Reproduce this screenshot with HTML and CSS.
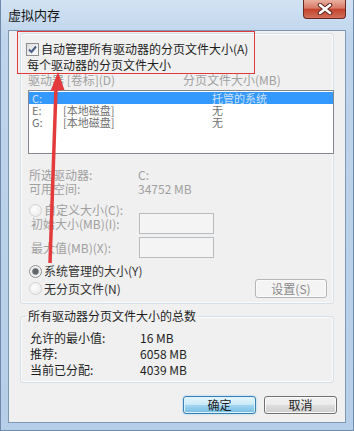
FILE: index.html
```html
<!DOCTYPE html>
<html lang="zh-CN">
<head>
    <meta charset="UTF-8">
    <title>虚拟内存</title>
    <link rel="stylesheet" href="styles.css">
</head>
<body>
    <div class="window">
        <div class="titlebar">
            <span class="title">虚拟内存</span>
            <div class="close">
                <svg width="16" height="12" viewBox="0 0 16 12">
                    <path d="M3 2 L13 10 M13 2 L3 10" stroke="#5a2018" stroke-width="4.5" stroke-linecap="round"/>
                    <path d="M3 2 L13 10 M13 2 L3 10" stroke="#fff" stroke-width="2.6" stroke-linecap="round"/>
                </svg>
            </div>
        </div>

        <div class="client">
            <div class="group paging">
                <div class="check-row">
                    <span class="checkbox">
                        <svg width="11" height="11" viewBox="0 0 11 11">
                            <path d="M2 5.5 L4.5 8 L9 2.5" fill="none" stroke="#4a5f86" stroke-width="2"/>
                        </svg>
                    </span>
                    <span>自动管理所有驱动器的分页文件大小(A)</span>
                </div>
                <div class="subtitle">每个驱动器的分页文件大小</div>
                <div class="list-head">
                    <span class="col-drive">驱动器 [卷标](D)</span>
                    <span>分页文件大小(MB)</span>
                </div>
                <div class="drive-list">
                    <div class="drive-row selected"><span class="c1">C:</span><span class="c2"></span><span>托管的系统</span></div>
                    <div class="drive-row"><span class="c1">E:</span><span class="c2">[本地磁盘]</span><span>无</span></div>
                    <div class="drive-row"><span class="c1">G:</span><span class="c2">[本地磁盘]</span><span>无</span></div>
                </div>

                <div class="info-row first"><span class="info-label">所选驱动器:</span><span>C:</span></div>
                <div class="info-row"><span class="info-label">可用空间:</span><span>34752 MB</span></div>

                <div class="radio-row custom"><span class="radio"></span><span class="muted">自定义大小(C):</span></div>
                <div class="field-row"><span class="field-label">初始大小(MB)(I):</span><span class="input"></span></div>
                <div class="field-row second"><span class="field-label">最大值(MB)(X):</span><span class="input"></span></div>
                <div class="radio-row system"><span class="radio on"></span><span>系统管理的大小(Y)</span></div>
                <div class="last-row">
                    <div class="radio-line"><span class="radio"></span><span>无分页文件(N)</span></div>
                    <button class="btn disabled">设置(S)</button>
                </div>
            </div>

            <fieldset class="group totals">
                <legend>所有驱动器分页文件大小的总数</legend>
                <div class="total-row first"><span class="total-label">允许的最小值:</span><span>16 MB</span></div>
                <div class="total-row"><span class="total-label">推荐:</span><span>6058 MB</span></div>
                <div class="total-row"><span class="total-label">当前已分配:</span><span>4039 MB</span></div>
            </fieldset>

            <div class="buttons">
                <button class="btn default">确定</button>
                <button class="btn">取消</button>
            </div>
        </div>

        <!-- annotation drawn over the dialog -->
        <div class="annot-box"></div>
        <svg class="annot-arrow" width="354" height="431" viewBox="0 0 354 431">
            <line x1="50" y1="263" x2="56" y2="88" stroke="#e33b3b" stroke-width="3.5"/>
            <polygon points="58,72 50.5,91 64.5,90" fill="#e33b3b"/>
        </svg>
    </div>
</body>
</html>
```

FILE: styles.css
```css
body {
    margin: 0;
    background: #b7cee8;
}

.window {
    position: relative;
    width: 354px;
    height: 431px;
    box-sizing: border-box;
    border: 1px solid #6f8aab;
    border-top: none;
    background: linear-gradient(#d2e2f3, #bed4ec 40px, #b7cee8);
    display: flex;
    flex-direction: column;
    font-family: "Noto Sans CJK SC", "Liberation Sans", sans-serif;
    font-size: 12px;
    color: #1e1e1e;
}

.titlebar {
    height: 30px;
    flex: none;
    display: flex;
    justify-content: space-between;
    align-items: flex-start;
}

.title {
    margin: 7px 0 0 7px;
    font-size: 13px;
    line-height: 16px;
    color: #161616;
}

.close {
    width: 43px;
    height: 19px;
    margin-right: 7px;
    box-sizing: border-box;
    border: 1px solid #6b2a21;
    border-top: none;
    border-radius: 0 0 4px 4px;
    background: linear-gradient(#eab0a0, #d77a66 45%, #c4452f 52%, #d2705a);
    display: flex;
    align-items: center;
    justify-content: center;
}

.client {
    flex: 1;
    margin: 0 7px 7px 7px;
    border: 1px solid #7d97b5;
    background: #f0f0f0;
    padding: 2px 11px 0 11px;
    display: flex;
    flex-direction: column;
}

.group {
    border: 1px solid #d5dfe5;
    border-radius: 3px;
    box-shadow: inset 0 0 0 1px #fbfbfb;
}

.paging {
    padding-bottom: 5px;
}

.check-row {
    margin-top: 8px;
    height: 14px;
    line-height: 14px;
    padding-left: 5px;
    display: flex;
    align-items: center;
    gap: 2px;
}

.checkbox {
    width: 13px;
    height: 13px;
    box-sizing: border-box;
    border: 1px solid #8e8f8f;
    background: linear-gradient(135deg, #dcdcdc, #fdfdfd);
    display: flex;
    align-items: center;
    justify-content: center;
}

.subtitle {
    margin: 2px 0 0 6px;
    line-height: 14px;
}

.list-head {
    margin-top: 1px;
    padding-left: 7px;
    line-height: 14px;
    color: #a0a0a0;
    display: flex;
}

.col-drive {
    width: 155px;
}

.drive-list {
    margin: 3px 0 0 7px;
    width: 306px;
    height: 64px;
    box-sizing: border-box;
    border: 1px solid #828790;
    background: #fff;
    padding-top: 1px;
}

.drive-row {
    height: 12px;
    line-height: 12px;
    font-size: 11px;
    padding-left: 3px;
    display: flex;
    color: #707070;
}

.drive-row.selected {
    background: #3399ff;
    color: #cfe0f5;
}

.c1 {
    width: 31px;
}

.c2 {
    width: 149px;
}

.info-row {
    line-height: 14px;
    padding-left: 8px;
    display: flex;
    color: #a0a0a0;
}

.info-row.first {
    margin-top: 14px;
}

.info-label {
    width: 109px;
}

.radio-row,
.radio-line {
    height: 14px;
    line-height: 14px;
    display: flex;
    align-items: center;
    gap: 2px;
}

.radio-row {
    padding-left: 8px;
}

.radio-row.custom {
    margin-top: 7px;
}

.radio-row.system {
    margin-top: 6px;
    color: #333;
}

.muted {
    color: #a0a0a0;
}

.radio {
    width: 13px;
    height: 13px;
    box-sizing: border-box;
    border-radius: 50%;
    border: 1px solid #d2d2d2;
    background: radial-gradient(circle at 40% 40%, #fdfdfd, #e8e8e8);
}

.radio.on {
    border-color: #8f8f8f;
    background: radial-gradient(circle, #5f6668 0 2.6px, #9a9fa1 3.2px, #ececec 3.8px, #f8f8f8 6px);
}

.field-row {
    margin-top: -4px;
    height: 21px;
    padding-left: 10px;
    display: flex;
    align-items: center;
    color: #a0a0a0;
}

.field-row.second {
    margin-top: 3px;
}

.field-label {
    width: 108px;
}

.input {
    width: 75px;
    height: 21px;
    box-sizing: border-box;
    border: 1px solid #b9bdc0;
    background: #f4f4f4;
}

.last-row {
    margin-top: 1px;
    height: 19px;
    padding-left: 8px;
    display: flex;
    justify-content: space-between;
    align-items: center;
    color: #333;
}

.btn {
    font-family: inherit;
    font-size: 12px;
    line-height: 16px;
    height: 18px;
    padding: 0;
    border: 1px solid #707070;
    border-radius: 3px;
    color: #1e1e1e;
    background: linear-gradient(#f2f2f2, #ebebeb 50%, #dddddd 50%, #cfcfcf);
    box-shadow: inset 0 0 0 1px #fafafa;
}

.btn.disabled {
    width: 72px;
    height: 19px;
    margin-right: 6px;
    border-color: #b3b7ba;
    background: #f4f4f4;
    color: #8a8a8a;
}

.totals {
    margin: 5px 0 0 0;
    padding: 0 0 4px 5px;
    min-width: 0;
}

.totals legend {
    padding: 0 2px;
    line-height: 14px;
    color: #1e1e1e;
}

.total-row {
    line-height: 16px;
    padding-left: 4px;
    display: flex;
}

.total-row.first {
    margin-top: 7px;
}

.total-label {
    width: 110px;
}

.buttons {
    margin: 13px -3px 0 0;
    display: flex;
    justify-content: flex-end;
    gap: 8px;
}

.buttons .btn {
    width: 73px;
}

.btn.default {
    border-color: #3c7fb1;
    background: linear-gradient(#e8f6fd, #c8e8f8 50%, #a2d6f1 50%, #76bde2);
    box-shadow: inset 0 0 0 1px #d9f1fc, 0 0 2px #7ec8f0;
}

.annot-box {
    position: absolute;
    left: 16px;
    top: 31px;
    width: 238px;
    height: 43px;
    box-sizing: border-box;
    border: 1px solid #e0393c;
}

.annot-arrow {
    position: absolute;
    left: -1px;
    top: 0;
}
```
